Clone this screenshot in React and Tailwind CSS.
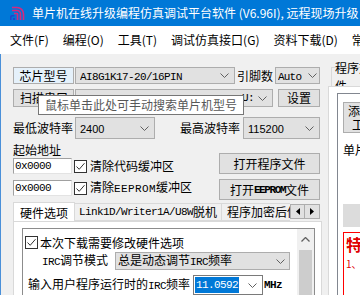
import React from 'react';

const cjk = "font-['Noto_Sans_CJK_SC',sans-serif]";
const mono = "font-['Liberation_Mono','Noto_Sans_CJK_SC',monospace]";

function Chevron({ color = '#606060' }) {
    return (
        <svg width="9" height="5" viewBox="0 0 9 5" className="shrink-0">
            <path d="M0.5 0.5 L4.5 4.5 L8.5 0.5" stroke={color} fill="none" strokeWidth="1" />
        </svg>
    );
}

function Combo({ className = '', children }) {
    return (
        <div className={`flex items-center justify-between overflow-hidden border border-[#adadad] bg-[#e1e1e1] ${className}`}>
            <div className="min-w-0 flex-1 overflow-hidden whitespace-nowrap">{children}</div>
            <Chevron />
        </div>
    );
}

function Button({ className = '', children }) {
    return (
        <div className={`flex items-center justify-center border border-[#adadad] bg-[#e1e1e1] whitespace-nowrap ${className}`}>
            {children}
        </div>
    );
}

function Check() {
    return (
        <div className="flex h-[13px] w-[13px] shrink-0 items-center justify-center border border-[#333] bg-white">
            <svg width="11" height="11" viewBox="0 0 11 11">
                <path d="M1.5 5.5 L4.2 8.3 L9.5 2.2" stroke="#333" fill="none" strokeWidth="1" />
            </svg>
        </div>
    );
}

function Logo() {
    return (
        <svg width="16" height="15" viewBox="0 0 16 15">
            <path d="M3 1.5 H8 A6.5 6.5 0 0 1 14.5 8 V14" stroke="#d6287f" fill="none" strokeWidth="1.6" />
            <path d="M3 4.5 H8 A3.5 3.5 0 0 1 11.5 8 V14" stroke="#d6287f" fill="none" strokeWidth="1.6" />
            <path d="M5 7.5 H8 A0.5 0.5 0 0 1 8.5 8 V14" stroke="#d6287f" fill="none" strokeWidth="1.6" />
            <path d="M1 14 V11 A2 2 0 0 1 3 9 H5.5 V10.5 H3.5 A1 1 0 0 0 2.5 11.5 V14 Z" fill="#2244cc" />
            <rect x="4" y="12" width="2" height="2" fill="#2244cc" />
        </svg>
    );
}

export default function App() {
    const menu = ['文件(F)', '编程(O)', '工具(T)', '调试仿真接口(G)', '资料下载(D)', '常用工具'];

    return (
        <div className={`flex h-[295px] w-[360px] flex-col overflow-hidden bg-[#f0f0f0] text-[12px] text-black ${cjk}`}>
            <div className="flex h-[26px] shrink-0 items-center bg-[#0078d7] pl-[9px]">
                <Logo />
                <span className="ml-[7px] whitespace-nowrap text-[12px] leading-[14px] text-white">
                    单片机在线升级编程仿真调试平台软件 (V6.96I), 远程现场升级
                </span>
            </div>

            <div className="flex h-[28px] shrink-0 items-center gap-[14px] bg-white pl-[10px] text-[12px] leading-[14px]">
                {menu.map((m) => (
                    <span key={m} className="whitespace-nowrap">{m}</span>
                ))}
            </div>

            <div className="relative flex flex-1 border-l border-[#4a90d9]">
                {/* left side */}
                <div className="flex w-[321px] shrink-0 flex-col pl-[12px] pt-[13px] leading-[14px]">
                    <div className="flex h-[17px] items-center">
                        <Button className="h-[17px] w-[61px] border-[#0078d7] bg-[#e5f1fb]">芯片型号</Button>
                        <Combo className="ml-[1px] h-[17px] w-[160px] pl-[4px] pr-[5px]">
                            <span className={`${mono} text-[11px] tracking-[-0.6px]`}>AI8G1K17-20/16PIN</span>
                        </Combo>
                        <span className="ml-[2px] w-[38px] shrink-0">引脚数</span>
                        <Combo className="h-[17px] w-[45px] shrink-0 pl-[2px] pr-[2px]">
                            <span className={`${mono} text-[11px] tracking-[-0.8px]`}>Auto</span>
                        </Combo>
                    </div>

                    <div className="mt-[5px] flex h-[18px] items-center">
                        <Button className="h-[18px] w-[61px] justify-start pl-[6px]">扫描串口</Button>
                        <div className="ml-[1px] flex h-[18px] w-[198px] items-center justify-end border border-[#adadad] bg-[#e1e1e1] pr-[5px]">
                            <span className={`${mono} mr-[4px] text-[11px] tracking-[-0.6px]`}>U:</span>
                            <Chevron />
                        </div>
                        <Button className="ml-[5px] h-[18px] w-[42px]">设置</Button>
                    </div>

                    <div className="mt-[10px] flex h-[22px] items-center">
                        <span className="w-[62px]">最低波特率</span>
                        <Combo className="h-[22px] w-[80px] pl-[4px] pr-[5px]">
                            <span className="font-['Liberation_Sans',sans-serif] text-[11px]">2400</span>
                        </Combo>
                        <span className="ml-[25px] w-[63px]">最高波特率</span>
                        <Combo className="h-[22px] w-[77px] pl-[4px] pr-[5px]">
                            <span className="font-['Liberation_Sans',sans-serif] text-[11px]">115200</span>
                        </Combo>
                    </div>

                    <div className="mt-[4px] flex">
                        <div className="flex w-[206px] flex-col">
                            <span className="h-[14px]">起始地址</span>
                            <div className="mt-[1px] flex h-[16px] items-center">
                                <div className={`flex h-[16px] w-[59px] items-center border border-[#a0a0a0] border-b-[#e3e3e3] border-r-[#e3e3e3] bg-white pl-[1px] ${mono} text-[11px] tracking-[-0.6px]`}>0x0000</div>
                                <div className="ml-[2px]"><Check /></div>
                                <span className="ml-[3px] whitespace-nowrap">清除代码缓冲区</span>
                            </div>
                            <div className="mt-[6px] flex h-[16px] items-center">
                                <div className={`flex h-[16px] w-[59px] items-center border border-[#a0a0a0] border-b-[#e3e3e3] border-r-[#e3e3e3] bg-white pl-[1px] ${mono} text-[11px] tracking-[-0.6px]`}>0x0000</div>
                                <div className="ml-[2px]"><Check /></div>
                                <span className="ml-[3px] whitespace-nowrap">清除<span className={`${mono} text-[11px] tracking-[0.4px]`}>EEPROM</span>缓冲区</span>
                            </div>
                        </div>
                        <div className="flex flex-col">
                            <Button className="mt-[10px] h-[21px] w-[101px]">打开程序文件</Button>
                            <Button className="mt-[5px] h-[21px] w-[101px]">
                                打开<span className={`${mono} text-[11px] font-bold tracking-[-1.4px]`}>EEPROM</span>文件
                            </Button>
                        </div>
                    </div>

                    {/* tabs */}
                    <div className="mt-[2px] flex h-[19px] items-end">
                        <div className="flex w-[277px] items-end overflow-hidden">
                            <div className="relative z-10 -mb-px flex h-[20px] w-[62px] shrink-0 items-center justify-center border border-b-0 border-[#d9d9d9] bg-white">硬件选项</div>
                            <div className="flex h-[18px] shrink-0 items-center border border-l-0 border-[#d9d9d9] bg-[#f0f0f0] pl-[4px] pr-[4px] whitespace-nowrap">
                                <span className={`${mono} text-[11px] tracking-[-0.6px]`}>Link1D/Writer1A/U8W</span>脱机
                            </div>
                            <div className="flex h-[18px] shrink-0 items-center border border-l-0 border-[#d9d9d9] bg-[#f0f0f0] pl-[5px] pr-[4px] whitespace-nowrap">程序加密后传输</div>
                        </div>
                        <div className="mb-[2px] flex h-[15px]">
                            <div className="flex w-[15px] items-center justify-center border border-[#adadad] bg-[#e1e1e1]">
                                <svg width="4" height="7" viewBox="0 0 4 7"><path d="M4 0 L0 3.5 L4 7 Z" fill="#000" /></svg>
                            </div>
                            <div className="flex w-[15px] items-center justify-center border border-l-0 border-[#adadad] bg-[#e1e1e1]">
                                <svg width="4" height="7" viewBox="0 0 4 7"><path d="M0 0 L4 3.5 L0 7 Z" fill="#000" /></svg>
                            </div>
                        </div>
                    </div>

                    <div className="flex h-[80px] w-[309px] flex-col border border-[#d9d9d9] bg-white pl-[8px] pt-[6px]">
                        <div className="flex h-[80px] w-[293px] border border-[#8c8c8c]">
                            <div className="flex flex-1 flex-col">
                                <div className="mt-[7px] flex h-[13px] items-center pl-[2px]">
                                    <Check />
                                    <span className="ml-[2px] whitespace-nowrap">本次下载需要修改硬件选项</span>
                                </div>
                                <div className="mt-[3px] flex h-[18px] items-center pl-[19px]">
                                    <span className="w-[73px] whitespace-nowrap">
                                        <span className={`${mono} text-[11px] tracking-[-0.6px]`}>IRC</span>调节模式
                                    </span>
                                    <Combo className="h-[18px] w-[175px] pl-[2px] pr-[4px]">
                                        总是动态调节<span className={`${mono} text-[11px] tracking-[-0.6px]`}>IRC</span>频率
                                    </Combo>
                                </div>
                                <div className="mt-[5px] flex h-[20px] items-center pl-[5px]">
                                    <span className="w-[165px] whitespace-nowrap">
                                        输入用户程序运行时的<span className={`${mono} text-[11px] tracking-[-0.6px]`}>IRC</span>频率
                                    </span>
                                    <div className="flex h-[20px] w-[70px] items-center justify-between border border-[#7a7a7a] bg-white pl-[1px] pr-[5px]">
                                        <span className={`bg-[#0078d7] px-[1px] text-white ${mono} text-[11px] leading-[16px] tracking-[-0.6px]`}>11.0592</span>
                                        <Chevron />
                                    </div>
                                    <span className={`ml-[1px] ${mono} text-[11px] font-bold tracking-[-0.6px]`}>MHz</span>
                                </div>
                            </div>
                            <div className="flex w-[17px] flex-col bg-[#f0f0f0]">
                                <div className="flex h-[21px] items-center justify-center">
                                    <svg width="9" height="5" viewBox="0 0 9 5"><path d="M0.5 4.5 L4.5 0.5 L8.5 4.5" stroke="#606060" fill="none" strokeWidth="1.3" /></svg>
                                </div>
                                <div className="mx-[2px] flex-1 bg-[#cdcdcd]" />
                            </div>
                        </div>
                    </div>
                </div>

                {/* right side */}
                <div className="ml-[6px] flex w-[120px] shrink-0 flex-col pt-[13px]">
                    <div className="ml-[3px] flex h-[19px] w-[50px] items-center border border-b-0 border-[#d9d9d9] bg-[#f0f0f0] pl-[3px]">程序文件</div>
                    <div className="flex flex-1 flex-col border border-[#d9d9d9] bg-white pl-[8px] pt-[6px]">
                        <div className="flex flex-1 flex-col border border-[#828790] pl-[5px] pt-[8px]">
                            <Button className="h-[31px] w-[70px] flex-col items-start justify-center leading-[14px]">
                                <span className="ml-[4px]">添加到项目</span>
                                <span className="ml-[8px]">工程文件</span>
                            </Button>
                            <span className="mt-[8px] h-[14px] whitespace-nowrap">单片机型号</span>
                            <div className="mt-[49px] h-[23px] w-[100px] bg-[#dcdcdc]" />
                            <div className="mt-[5px] flex flex-1 flex-col border border-[#ff0000] pl-[2px] pt-[2px] text-[#e00000]">
                                <span className="text-[16px] font-bold leading-[18px]">特别注意</span>
                                <span className="mt-[5px] text-[10px] leading-[12px]">1、</span>
                            </div>
                        </div>
                    </div>
                </div>

                {/* tooltip */}
                <div className="absolute left-[37px] top-[41px] flex h-[20px] w-[206px] items-center border border-[#767676] bg-white pl-[6px] text-[12px] text-[#575757] whitespace-nowrap">
                    鼠标单击此处可手动搜索单片机型号
                </div>
            </div>
        </div>
    );
}
